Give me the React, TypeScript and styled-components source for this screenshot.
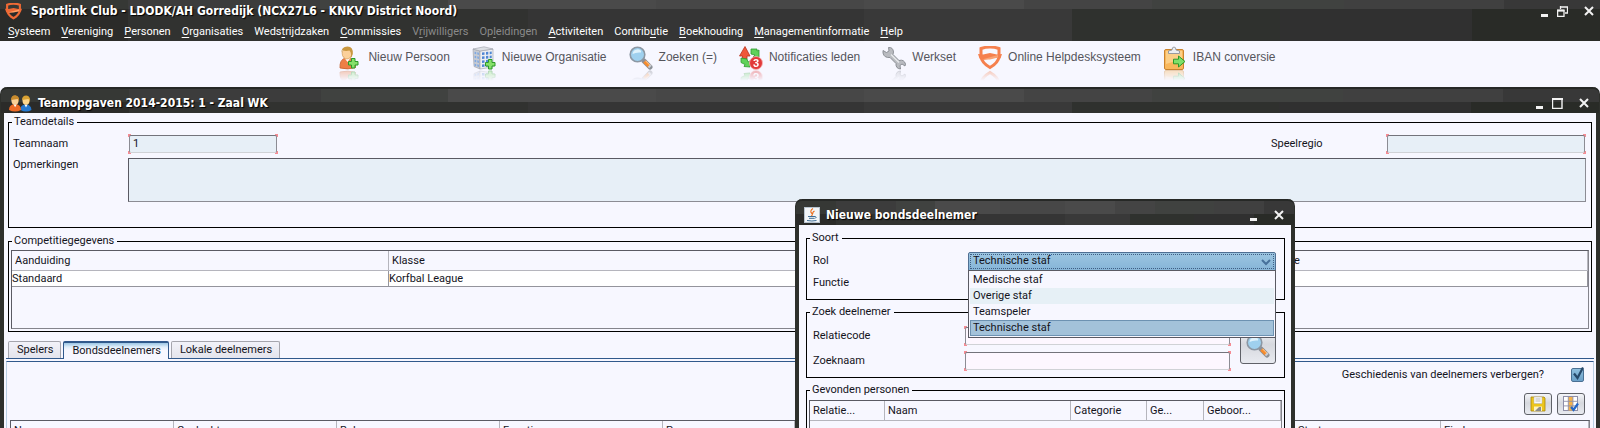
import React from "react";
import styled, { createGlobalStyle, css } from "styled-components";

const ui = `Roboto, "Liberation Sans", sans-serif`;
const titleFont = `"DejaVu Sans Condensed", "DejaVu Sans", sans-serif`;
const surface = "#f7f7ff";
const readOnlyFill = "#e7eff7";
const line = "#5a5a63";

const GlobalStyle = createGlobalStyle`
  *, *::before, *::after { box-sizing: border-box; }
  body {
    margin: 0;
    overflow: hidden;
    background: ${surface};
    color: #14141c;
    font: 11px/14px ${ui};
  }
  button, input, select, textarea { font: inherit; color: inherit; margin: 0; }
`;

const darkChrome = css`
  background:
    linear-gradient(90deg, #363835 0 8%, #3c3c3c 8% 20%, #404240 20% 28%, #4a4a4a 28% 41%, #474747 41% 54%, #4a4a4a 54% 64%, #444 64% 72%, #404240 72% 84%, #404040 84% 94%, #383838 94%) 0 0 / 100% var(--band) no-repeat,
    linear-gradient(90deg, #2b2b29 0 8%, #313230 8% 33%, #353535 33% 54%, #393939 54% 67%, #2f312e 67% 80%, #303030 80% 92%, #292b27 92%);
`;

/* ---------- application frame ---------- */

const Page = styled.div`
  position: relative;
  display: flex;
  flex-direction: column;
  height: 100vh;
  overflow: hidden;
`;

const AppHeader = styled.header`
  --band: 9px;
  ${darkChrome}
  color: #fff;
  height: 41px;
  flex: none;
`;

const TitleRow = styled.div`
  display: flex;
  align-items: center;
  height: 22px;
  padding: 0 6px 0 5px;
  gap: 9px;
`;

const Title = styled.h1`
  flex: 1;
  margin: 0;
  color: #fff;
  font: bold 12px/16px ${titleFont};
  text-shadow: 1px 1px 1px #000;
  white-space: nowrap;
`;

const WindowControls = styled.div`
  display: flex;
  align-items: center;
`;

const ControlButton = styled.button<{ $wide?: boolean }>`
  display: block;
  width: ${(p) => (p.$wide ? 26 : 19)}px;
  height: 14px;
  padding: 0;
  border: 0;
  background: none;
  svg { display: block; margin-left: auto; }
`;

const MenuBar = styled.nav`
  display: flex;
  gap: 11px;
  padding: 3px 8px 0;
`;

const MenuItem = styled.button<{ $off?: boolean }>`
  padding: 0;
  border: 0;
  background: none;
  line-height: 14px;
  white-space: nowrap;
  color: ${(p) => (p.$off ? "#8a8a8a" : "#fff")};
  u { text-underline-offset: 2px; }
`;

const Toolbar = styled.div`
  display: flex;
  flex: none;
  justify-content: center;
  align-items: flex-start;
  gap: 22px;
  height: 46px;
  padding: 5px 0 0 14px;
`;

const ToolButton = styled.button`
  display: flex;
  align-items: center;
  gap: 6px;
  height: 24px;
  padding: 0;
  border: 0;
  background: none;
  color: #55555c;
  font: 12px/16px "Liberation Sans", Arial, sans-serif;
  white-space: nowrap;
`;

const Reflected = styled.span`
  display: block;
  height: 24px;
  -webkit-box-reflect: below 0 linear-gradient(transparent 55%, rgba(0, 0, 0, 0.4));
  svg { display: block; }
`;

const ToolLabel = styled.span`
  height: 18px;
`;

/* ---------- windows ---------- */

const frame = css`
  display: flex;
  flex-direction: column;
  border: solid #2e302c;
  border-width: 0 4px;
  border-radius: 7px 7px 0 0;
  background: ${surface};
`;

const MainWindow = styled.main`
  ${frame}
  flex: 1;
  min-height: 0;
`;

const Dialog = styled.section`
  ${frame}
  position: absolute;
  left: 795px;
  top: 199px;
  width: 500px;
`;

const WindowBar = styled.div`
  --band: 13px;
  ${darkChrome}
  display: flex;
  flex: none;
  align-items: center;
  gap: 6px;
  height: 26px;
  margin: 0 -3px;
  padding: 4px 10px 0 8px;
  border-top: 2px solid #262826;
  border-radius: 6px 6px 0 0;
`;

const WindowBody = styled.div`
  display: flex;
  flex-direction: column;
  flex: 1;
  padding: 2px 2px 0;
`;

const DialogBody = styled.div`
  display: flex;
  flex-direction: column;
  gap: 5px;
  padding: 6px 6px 0 7px;
`;

const Group = styled.fieldset`
  min-width: 0;
  margin: 0;
  padding: 0;
  border: 1px solid #000;
  ${WindowBody} > & { margin: 0 2px 6px; }
`;

const GroupBody = styled.div<{ $pad: string }>`
  padding: ${(p) => p.$pad};
`;

const Legend = styled.legend`
  margin-left: 3px;
  padding: 0 3px 0 2px;
  line-height: 14px;
`;

/* ---------- fields ---------- */

const FieldRow = styled.div<{ $top?: boolean }>`
  display: flex;
  align-items: ${(p) => (p.$top ? "flex-start" : "center")};
  margin-bottom: 4px;
`;

const FieldLabel = styled.label<{ $w: number }>`
  flex: none;
  width: ${(p) => p.$w}px;
`;

const Spacer = styled.div`
  flex: 1;
`;

const corner = (x: string, y: string) =>
  `linear-gradient(#f58c94, #f58c94) ${x} ${y} / 3px 3px no-repeat`;

const FieldShell = styled.span<{ $w: number }>`
  display: flex;
  flex: none;
  width: ${(p) => p.$w}px;
  height: 20px;
  padding: 1px;
  background: ${corner("0", "0")}, ${corner("100%", "0")}, ${corner("0", "100%")}, ${corner("100%", "100%")};
`;

const TextField = styled.input<{ $edit?: boolean }>`
  flex: 1;
  min-width: 0;
  padding: 0 3px;
  border: 1px solid #8c8c94;
  border-top-color: #73737b;
  border-bottom-color: #d0d2d6;
  border-radius: 2px;
  outline: 0;
  background: ${(p) => (p.$edit ? "#fdf7ff" : readOnlyFill)};
`;

const Notes = styled.textarea`
  flex: 1;
  height: 44px;
  border: 1px solid #8c8c94;
  border-top-color: ${line};
  border-left-color: ${line};
  outline: 0;
  resize: none;
  background: ${readOnlyFill};
`;

/* ---------- tables ---------- */

const TableFrame = styled.div<{ $h: number }>`
  height: ${(p) => p.$h}px;
  border: 1px solid #84848c;
  border-top-color: ${line};
  border-left-color: ${line};
  overflow: hidden;
`;

const Table = styled.table`
  width: 100%;
  border-collapse: separate;
  border-spacing: 0;
  table-layout: fixed;
  th, td {
    padding: 0;
    text-align: left;
    font-weight: 400;
    white-space: nowrap;
    overflow: hidden;
  }
  th {
    height: 20px;
    padding: 0 3px;
    border-right: 1px solid #b5b5bd;
    border-bottom: 1px solid #b5b5bd;
  }
  td {
    height: 16px;
    line-height: 14px;
    border-right: 1px solid #94949c;
    border-bottom: 1px solid #94949c;
    background: #fff;
  }
`;

const Col = styled.col<{ $w?: number }>`
  width: ${(p) => (p.$w ? `${p.$w}px` : "auto")};
`;

/* ---------- tabs ---------- */

const Tabs = styled.div`
  display: flex;
  gap: 2px;
  height: 18px;
  margin: 3px 0 -1px 2px;
`;

const Tab = styled.button<{ $on?: boolean }>`
  position: relative;
  height: ${(p) => (p.$on ? 18 : 17)}px;
  padding: 0 7px 0 8px;
  border: 1px solid #a5a5ad;
  border-bottom: 0;
  border-radius: 2px 2px 0 0;
  background: linear-gradient(#f2f2f9, #e4e4ec);
  line-height: 16px;
  ${(p) =>
    p.$on &&
    css`
      z-index: 1;
      border-color: #31598c;
      border-top-width: 2px;
      background: linear-gradient(#9cc6e4, #e0eefa 4px, ${surface} 7px);
    `}
`;

const TabPanel = styled.div`
  flex: 1;
  border-top: 1px solid #31598c;
  padding-top: 2px;
`;

const TabInner = styled.div`
  height: 100%;
  padding: 0 3px;
  border: 1px solid #b9cfe4;
  border-top-color: #31598c;
`;

const CheckRow = styled.div`
  display: flex;
  justify-content: flex-end;
  align-items: center;
  gap: 27px;
  height: 25px;
  padding-right: 6px;
`;

const CheckWrap = styled.span`
  position: relative;
  display: block;
  width: 13px;
  height: 14px;
`;

const CheckBox = styled.input`
  appearance: none;
  display: block;
  width: 13px;
  height: 14px;
  border: 1px solid #4a7094;
  border-radius: 2px;
  background: linear-gradient(#8ebede, #6ba0c8);
`;

const CheckMark = styled.svg`
  position: absolute;
  left: 2px;
  top: -2px;
  pointer-events: none;
`;

const ButtonRow = styled.div`
  display: flex;
  justify-content: flex-end;
  gap: 5px;
  padding: 6px 5px 5px;
`;

const IconButton = styled.button<{ $w: number; $h: number }>`
  display: grid;
  flex: none;
  place-items: center;
  width: ${(p) => p.$w}px;
  height: ${(p) => p.$h}px;
  padding: 0;
  border: 1px solid #5f6168;
  border-radius: 3px;
  background: linear-gradient(#f4f5f9, #d6d8de 45%, #e8eaf0);
`;

/* ---------- dialog parts ---------- */

const Combo = styled.div`
  position: relative;
  flex: 1;
  height: 19px;
`;

const ComboSelect = styled.select`
  appearance: none;
  display: block;
  width: 100%;
  height: 19px;
  padding: 0 4px;
  border: 1px solid #4f6f93;
  border-radius: 2px 2px 0 0;
  outline: 1px dotted #3f5f84;
  outline-offset: -3px;
  background: linear-gradient(#9cc5e1, #86b5d8);
`;

const ComboArrow = styled.svg`
  position: absolute;
  right: 5px;
  top: 7px;
  pointer-events: none;
`;

const Popup = styled.ul`
  position: absolute;
  z-index: 2;
  left: 0;
  top: 18px;
  width: 100%;
  margin: 0;
  padding: 1px;
  list-style: none;
  border: 1px solid ${line};
  background: ${surface};
`;

const Option = styled.li<{ $tone?: "alt" | "picked" }>`
  height: 16px;
  padding: 0 3px;
  line-height: 16px;
  ${(p) => p.$tone === "alt" && css`background: #e6f0f6;`}
  ${(p) =>
    p.$tone === "picked" &&
    css`
      background: #a3c2da;
      box-shadow: inset 0 0 0 1px #6d92b2;
    `}
`;

const DialogRow = styled.div<{ $h: number }>`
  display: flex;
  align-items: center;
  height: ${(p) => p.$h}px;
`;

const SearchArea = styled.div`
  display: flex;
  justify-content: space-between;
  align-items: flex-end;
`;

const SearchSlot = styled.div`
  padding-bottom: 9px;
`;

/* ---------- drawings ---------- */

const Minimise = () => (
  <svg width="8" height="12"><path d="M0 9h7v3h-7z" fill="#f2f2f2" /></svg>
);
const Close = () => (
  <svg width="10" height="10"><path d="M1 1l8 8M9 1l-8 8" stroke="#f2f2f2" strokeWidth="2" /></svg>
);
const Maximise = () => (
  <svg width="11" height="11"><path d="M.5 0v10.500h9.500V1H0" fill="none" stroke="#f2f2f2" strokeWidth="1.400" /><path d="M0 1h11" stroke="#f2f2f2" strokeWidth="2" /></svg>
);
const Restore = () => (
  <svg width="11" height="11"><path d="M3 1h7.500v6H8M3.500 0v3" fill="none" stroke="#f2f2f2" strokeWidth="1.300" /><path d="M.6 4.500h6.400v5.900H.6z" fill="none" stroke="#f2f2f2" strokeWidth="1.300" /><path d="M0 4.500h7.500" stroke="#f2f2f2" strokeWidth="2" /></svg>
);

const Shield = ({ size = 24, color = "#f5804e", band = "#f9a274" }: { size?: number; color?: string; band?: string }) => (
  <svg width={size} height={size} viewBox="0 0 24 24">
    <path d="M3 2.500Q12-.5 21 2.500V11Q20 17 12 21.500 4 17 3 11Z" fill="none" stroke={color} strokeWidth="3" />
    <path d="M0 8L5 8.500 12 7 19 8.500 24 8 22.500 12.500 18 11.500 5 14 1.500 12.500Z" fill={color} />
    <path d="M4 13.500L20 9V11.500L12 13.500Z" fill={band} />
  </svg>
);

const Plus = ({ x, y }: { x: number; y: number }) => (
  <path transform={`translate(${x} ${y})`} d="M3.500.5h3.500v3h3v3.500h-3v3h-3.500v-3h-3v-3.500h3z" fill="#86e06a" stroke="#2c9a2a" />
);

const PersonAdd = () => (
  <svg width="24" height="24" viewBox="0 0 24 24">
    <path d="M2 22Q1.500 14 7 12h5q6 2 5.500 9.500Q10 24 2 22Z" fill="#ee7f45" stroke="#c6602c" strokeWidth=".8" />
    <path d="M6.500 12l3 4 3-4z" fill="#fff" />
    <ellipse cx="9" cy="7.500" rx="4.800" ry="5.500" fill="#fbd09a" stroke="#c99147" strokeWidth=".6" />
    <path d="M3.500 7Q3 .8 9.500.6 15.500 1 14.800 8 14 11 12.500 12 14 7 11.500 4.500 7 5.500 4.500 4Z" fill="#c9973f" />
    <Plus x={10} y={12} />
  </svg>
);

const Building = () => (
  <svg width="24" height="24" viewBox="0 0 24 24">
    <path d="M1 3L8 5v18L2 20.500Z" fill="#c9ccd3" stroke="#9a9ea8" strokeWidth=".6" />
    <path d="M8 5L21 3v18L8 23Z" fill="#eceef2" stroke="#9a9ea8" strokeWidth=".6" />
    <path d="M1 3L12 .8 21 3 8 5Z" fill="#dcdfe5" stroke="#9a9ea8" strokeWidth=".6" />
    {[6.5, 10.5, 14.5, 18.5].map((y) => (
      <g key={y} fill="#4f86d4">
        <path d={`M10 ${y}l2.500-.3v2.600l-2.500.3zM14 ${y - 0.4}l2.300-.3v2.600l-2.300.3zM17.700 ${y - 0.8}l2-.3v2.600l-2 .3z`} />
        <path d={`M2.600 ${y - 0.8}l1.600.4v2.200l-1.600-.4zM5.300 ${y - 0.2}l1.600.4v2.200l-1.600-.4z`} fill="#7fa8e2" />
      </g>
    ))}
    <Plus x={13} y={13} />
  </svg>
);

const Magnifier = () => (
  <svg width="24" height="24" viewBox="0 0 24 24">
    <path d="M15 15l6 6" stroke="#8b8f96" strokeWidth="5" strokeLinecap="round" />
    <path d="M15.500 15.500l5 5" stroke="#f68b2c" strokeWidth="3.600" />
    <path d="M16.500 14.800l5 5" stroke="#ffd09a" strokeWidth="1" />
    <path d="M19.500 21.500l2.500-2.500" stroke="#c9ccd2" strokeWidth="2" />
    <circle cx="8.500" cy="8.500" r="7.300" fill="#9fd0ee" stroke="#8c97a3" strokeWidth="1.600" />
    <path d="M3.500 8Q4 3.500 9 3.200 13 4 12 6.500 7 6 3.500 8Z" fill="#dff2fc" />
  </svg>
);

const Notify = () => (
  <svg width="24" height="24" viewBox="0 0 24 24">
    <path d="M6 .5l5 9.500H8v3H3.500v-3H.5Z" fill="#f0573a" stroke="#b8341f" strokeWidth=".8" />
    <path d="M12 3h6v2l2-1v7h-6l2-2-4-1Z" fill="#5fd25a" stroke="#2f9a30" strokeWidth=".8" />
    <path d="M2 12l6 1 1 3 2-1v6l-6-.5 1-2-4-2Z" fill="#5fd25a" stroke="#2f9a30" strokeWidth=".8" />
    <circle cx="17" cy="17" r="6.500" fill="#e23a3a" stroke="#f8b6b6" strokeWidth=".8" />
    <text x="17" y="21" fill="#fff" fontSize="11" fontWeight="700" fontFamily="Liberation Sans, sans-serif" textAnchor="middle">3</text>
  </svg>
);

const Wrench = () => (
  <svg width="24" height="24" viewBox="0 0 24 24">
    <path d="M1 4.500L4.500 6.500 7 5 6.500 1.500Q11 1 11.500 6L11 8.500 17 14.500Q22 13 23.500 18L23 20 20 18 18 19.500 18.500 23Q13.500 22.500 14 17.500L8 11.500Q2 12 1 7Z" fill="#b9bbc0" stroke="#85888f" strokeWidth=".9" />
    <path d="M9 8.500l8 8" stroke="#e8e9ec" strokeWidth="1.400" />
  </svg>
);

const Clipboard = () => (
  <svg width="24" height="24" viewBox="0 0 24 24">
    <rect x="1.500" y="3.500" width="19" height="20" rx="1.500" fill="#f9b75c" stroke="#c9832f" />
    <path d="M3 5h16v8L3 18Z" fill="#fccf88" />
    <path d="M5.500 7.500V5L9 4Q9 1 11 1t2 3l3.500 1v2.500Z" fill="#eceef2" stroke="#8f939b" strokeWidth=".9" />
    <path d="M10.500 13.200h5V10l6.500 5.500-6.500 5.500v-3.200h-5Z" fill="#7fe06a" stroke="#2c9a2a" />
  </svg>
);

const Team = () => (
  <svg width="23" height="17" viewBox="0 0 23 17">
    <path d="M11.500 15Q11 10 16 9.500q6-.5 6.500 5.500Q17 18 11.500 15Z" fill="#2478cf" />
    <path d="M15.500 9.500l1.500 3 1.500-3Z" fill="#fff" />
    <ellipse cx="17" cy="5.500" rx="3.500" ry="4.300" fill="#fbd58c" />
    <path d="M13 5Q13 .5 17.300.5 21.800 1 21 7L19.500 4Q16 4.500 13 5Z" fill="#d9a233" />
    <path d="M0 15Q0 9.500 6 9q6 .5 6 6Q6 18 0 15Z" fill="#ee6a26" />
    <path d="M4.500 9.200l1.600 3 1.600-3Z" fill="#fff" />
    <ellipse cx="6" cy="5.300" rx="3.600" ry="4.500" fill="#fbcf96" />
    <path d="M2 5Q2 .2 6.300.2 11 .8 10 7L8.700 4Q5 4.500 2 5Z" fill="#c98b2c" />
  </svg>
);

const JavaCup = () => (
  <svg width="16" height="16" viewBox="0 0 16 16">
    <rect x=".5" y=".5" width="15" height="15" fill="#f2f5f8" stroke="#b9c4cf" />
    <path d="M9 1.500Q5.500 4 7.500 6T7 9M10.500 4Q8 5.500 9 7" fill="none" stroke="#ec6f1e" strokeWidth="1.100" />
    <path d="M4 9.500h7M5 11.300h5.500M3 13.500q5 1 9.500 0M11 9.500q2.500.5 0 2" fill="none" stroke="#3f6e97" strokeWidth="1" />
  </svg>
);

const Floppy = () => (
  <svg width="16" height="16" viewBox="0 0 16 16">
    <path d="M1 1h13l1 1v13H1Z" fill="#ecc51c" stroke="#a8860c" strokeWidth=".8" />
    <path d="M4 1h8v6.500H4Z" fill="#fafafa" stroke="#b5b5b5" strokeWidth=".5" />
    <path d="M5.500 3h5M5.500 5h5" stroke="#a9a9a9" strokeWidth=".8" />
    <path d="M4 10.500h8V15H4Z" fill="#fdf3c0" />
    <path d="M5 15l4-4h2v4Z" fill="#8b8b8b" />
  </svg>
);

const GridCheck = () => (
  <svg width="16" height="16" viewBox="0 0 16 16">
    <rect x=".5" y=".5" width="14" height="14" fill="#fff" stroke="#8f8fa8" />
    <path d="M5.300 1h4.600v13.500H5.300Z" fill="#f5b24a" />
    <path d="M.5 5.300h14M.5 9.900h14M5.300.5v14M9.900.5v14" stroke="#8f8fa8" strokeWidth=".9" />
    <path d="M8 11l2.500 3L15 7.500" fill="none" stroke="#2367c9" strokeWidth="2.200" />
  </svg>
);

/* ---------- content ---------- */

const menu: [string, string, string, boolean?][] = [
  ["", "S", "ysteem"],
  ["", "V", "ereniging"],
  ["", "P", "ersonen"],
  ["", "O", "rganisaties"],
  ["Weds", "t", "rijdzaken"],
  ["", "C", "ommissies"],
  ["V", "r", "ijwilligers", true],
  ["Op", "l", "eidingen", true],
  ["", "A", "ctiviteiten"],
  ["Contrib", "u", "tie"],
  ["", "B", "oekhouding"],
  ["", "M", "anagementinformatie"],
  ["", "H", "elp"],
];

const tools: [React.ReactNode, string][] = [
  [<PersonAdd />, "Nieuw Persoon"],
  [<Building />, "Nieuwe Organisatie"],
  [<Magnifier />, "Zoeken (=)"],
  [<Notify />, "Notificaties leden"],
  [<Wrench />, "Werkset"],
  [<Shield />, "Online Helpdesksysteem"],
  [<Clipboard />, "IBAN conversie"],
];

const roles: [string, ("alt" | "picked")?][] = [
  ["Medische staf"],
  ["Overige staf", "alt"],
  ["Teamspeler"],
  ["Technische staf", "picked"],
];

const Field = ({ id, width, value, edit }: { id: string; width: number; value?: string; edit?: boolean }) => (
  <FieldShell $w={width}>
    <TextField id={id} defaultValue={value} readOnly={!edit} $edit={edit} />
  </FieldShell>
);

const DataTable = ({ height, columns, rows = [] }: { height: number; columns: [string, number?][]; rows?: string[][] }) => (
  <TableFrame $h={height}>
    <Table>
      <colgroup>{columns.map(([, w], i) => <Col key={i} $w={w} />)}</colgroup>
      <thead>
        <tr>{columns.map(([name], i) => <th key={i} scope="col">{name}</th>)}</tr>
      </thead>
      <tbody>
        {rows.map((r, i) => <tr key={i}>{r.map((c, j) => <td key={j}>{c}</td>)}</tr>)}
      </tbody>
    </Table>
  </TableFrame>
);

export default function App() {
  return (
    <Page>
      <GlobalStyle />
      <AppHeader>
        <TitleRow>
          <Shield size={17} color="#ef6a35" band="#ffa066" />
          <Title>Sportlink Club - LDODK/AH Gorredijk (NCX27L6 - KNKV District Noord)</Title>
          <WindowControls>
            <ControlButton aria-label="Minimaliseren"><Minimise /></ControlButton>
            <ControlButton aria-label="Herstellen"><Restore /></ControlButton>
            <ControlButton $wide aria-label="Sluiten"><Close /></ControlButton>
          </WindowControls>
        </TitleRow>
        <MenuBar>
          {menu.map(([a, key, b, off]) => (
            <MenuItem key={a + key + b} $off={off} disabled={off}>{a}<u>{key}</u>{b}</MenuItem>
          ))}
        </MenuBar>
      </AppHeader>

      <Toolbar>
        {tools.map(([icon, name]) => (
          <ToolButton key={name}>
            <Reflected>{icon}</Reflected>
            <ToolLabel>{name}</ToolLabel>
          </ToolButton>
        ))}
      </Toolbar>

      <MainWindow>
        <WindowBar>
          <Team />
          <Title as="h2">Teamopgaven 2014-2015: 1 - Zaal WK</Title>
          <WindowControls>
            <ControlButton aria-label="Minimaliseren"><Minimise /></ControlButton>
            <ControlButton aria-label="Maximaliseren"><Maximise /></ControlButton>
            <ControlButton $wide aria-label="Sluiten"><Close /></ControlButton>
          </WindowControls>
        </WindowBar>
        <WindowBody>
          <Group>
            <Legend>Teamdetails</Legend>
            <GroupBody $pad="5px 5px 21px 4px">
              <FieldRow>
                <FieldLabel $w={115} htmlFor="teamnaam">Teamnaam</FieldLabel>
                <Field id="teamnaam" width={150} value="1" />
                <Spacer />
                <FieldLabel $w={115} htmlFor="speelregio">Speelregio</FieldLabel>
                <Field id="speelregio" width={200} />
              </FieldRow>
              <FieldRow $top>
                <FieldLabel $w={115} htmlFor="opmerkingen">Opmerkingen</FieldLabel>
                <Notes id="opmerkingen" readOnly />
              </FieldRow>
            </GroupBody>
          </Group>

          <Group>
            <Legend>Competitiegegevens</Legend>
            <GroupBody $pad="2px">
              <DataTable
                height={79}
                columns={[["Aanduiding", 377], ["Klasse"], ["Poule", 319]]}
                rows={[["Standaard", "Korfbal League", ""]]}
              />
            </GroupBody>
          </Group>

          <Tabs role="tablist">
            <Tab role="tab">Spelers</Tab>
            <Tab role="tab" $on aria-selected="true">Bondsdeelnemers</Tab>
            <Tab role="tab">Lokale deelnemers</Tab>
          </Tabs>
          <TabPanel role="tabpanel">
            <TabInner>
              <CheckRow>
                <label htmlFor="verbergen">Geschiedenis van deelnemers verbergen?</label>
                <CheckWrap>
                  <CheckBox id="verbergen" type="checkbox" defaultChecked />
                  <CheckMark width="12" height="14"><path d="M1 7.500l3.500 4.500L10 1.500" fill="none" stroke="#27496b" strokeWidth="2.200" /></CheckMark>
                </CheckWrap>
              </CheckRow>
              <ButtonRow>
                <IconButton $w={28} $h={22} aria-label="Opslaan"><Floppy /></IconButton>
                <IconButton $w={28} $h={22} aria-label="Kolommen kiezen"><GridCheck /></IconButton>
              </ButtonRow>
              <DataTable
                height={120}
                columns={[["Naam", 163], ["Geslacht", 163], ["Rol", 163], ["Functie", 163], ["Pas", 132], ["", 500], ["Start"], ["Einde", 148]]}
              />
            </TabInner>
          </TabPanel>
        </WindowBody>
      </MainWindow>

      <Dialog role="dialog" aria-label="Nieuwe bondsdeelnemer">
        <WindowBar>
          <JavaCup />
          <Title as="h2">Nieuwe bondsdeelnemer</Title>
          <WindowControls>
            <ControlButton aria-label="Minimaliseren"><Minimise /></ControlButton>
            <ControlButton $wide aria-label="Sluiten"><Close /></ControlButton>
          </WindowControls>
        </WindowBar>
        <DialogBody>
          <Group>
            <Legend>Soort</Legend>
            <GroupBody $pad="5px 8px 5px 6px">
              <DialogRow $h={22}>
                <FieldLabel $w={155} htmlFor="rol">Rol</FieldLabel>
                <Combo>
                  <ComboSelect id="rol" defaultValue="Technische staf">
                    {roles.map(([name]) => <option key={name}>{name}</option>)}
                  </ComboSelect>
                  <ComboArrow width="10" height="7"><path d="M1 1l4 4 4-4" fill="none" stroke="#47719b" strokeWidth="2" /></ComboArrow>
                  <Popup role="listbox" aria-label="Rol">
                    {roles.map(([name, tone]) => (
                      <Option key={name} role="option" aria-selected={tone === "picked"} $tone={tone}>{name}</Option>
                    ))}
                  </Popup>
                </Combo>
              </DialogRow>
              <DialogRow $h={22}>
                <FieldLabel as="span" $w={155}>Functie</FieldLabel>
              </DialogRow>
            </GroupBody>
          </Group>

          <Group>
            <Legend>Zoek deelnemer</Legend>
            <GroupBody $pad="4px 8px 4px 6px">
              <SearchArea>
                <div>
                  <DialogRow $h={25}>
                    <FieldLabel $w={151} htmlFor="relatiecode">Relatiecode</FieldLabel>
                    <Field id="relatiecode" width={267} edit />
                  </DialogRow>
                  <DialogRow $h={25}>
                    <FieldLabel $w={151} htmlFor="zoeknaam">Zoeknaam</FieldLabel>
                    <Field id="zoeknaam" width={267} edit />
                  </DialogRow>
                </div>
                <SearchSlot>
                  <IconButton $w={36} $h={36} aria-label="Zoeken"><Magnifier /></IconButton>
                </SearchSlot>
              </SearchArea>
            </GroupBody>
          </Group>

          <Group>
            <Legend>Gevonden personen</Legend>
            <GroupBody $pad="3px 2px">
              <DataTable
                height={120}
                columns={[["Relatie...", 75], ["Naam"], ["Categorie", 76], ["Ge...", 57], ["Geboor...", 77]]}
              />
            </GroupBody>
          </Group>
        </DialogBody>
      </Dialog>
    </Page>
  );
}
